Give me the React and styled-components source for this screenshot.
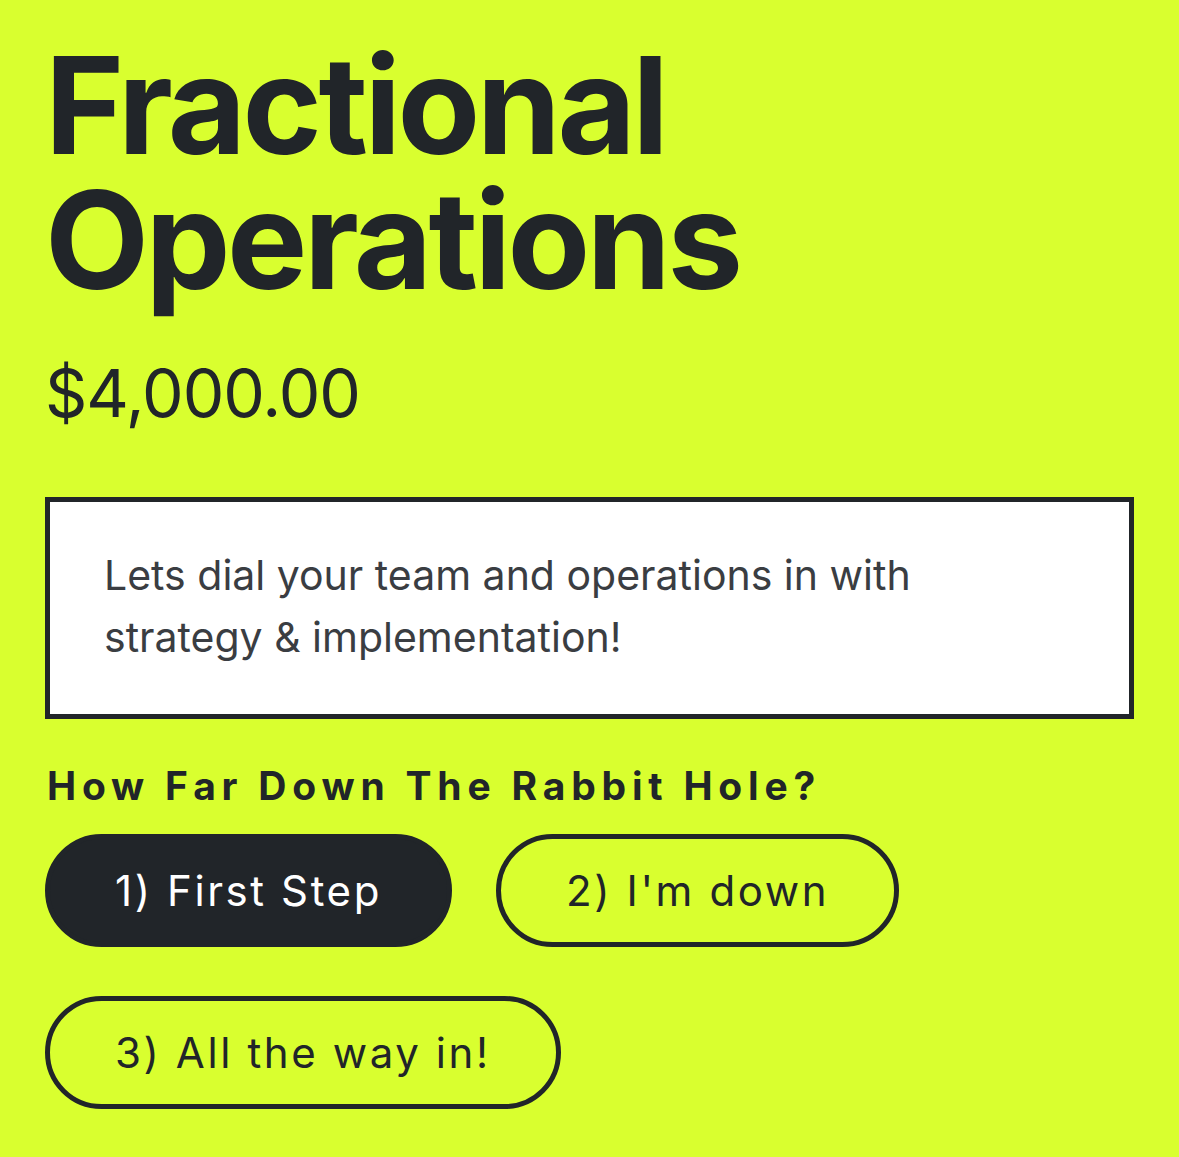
import React, { useState } from 'react';
import styled, { createGlobalStyle } from 'styled-components';

const GlobalStyle = createGlobalStyle`
  html, body {
    margin: 0;
    padding: 0;
    background: #d9ff2f;
  }
  body {
    font-family: Inter, "Noto Sans", sans-serif;
    color: #212529;
  }
`;

const Page = styled.main`
  min-height: 1157px;
  box-sizing: border-box;
  padding: 38px 45px 40px 45px;
  background: #d9ff2f;
`;

const Title = styled.h1`
  margin: 0;
  font-size: 135px;
  font-weight: 700;
  line-height: 135px;
  letter-spacing: -3.5px;
  color: #212529;
`;

const Price = styled.div`
  margin-top: 45px;
  font-size: 66px;
  font-weight: 400;
  line-height: 80px;
  letter-spacing: -1px;
`;

const Description = styled.div`
  margin-top: 64px;
  border: 5px solid #212529;
  background: #ffffff;
  padding: 42px 54px 46px 54px;
  font-size: 41px;
  line-height: 62px;
  color: #3a3d42;
`;

const Label = styled.h2`
  margin: 44px 0 0 2px;
  font-size: 39px;
  font-weight: 700;
  letter-spacing: 5.8px;
  line-height: 46px;
`;

const Options = styled.div`
  margin-top: 25px;
  display: flex;
  flex-wrap: wrap;
  column-gap: 44px;
  row-gap: 49px;
  max-width: 900px;
`;

const Option = styled.button`
  box-sizing: border-box;
  height: 113px;
  padding: 0 65px;
  border-radius: 57px;
  border: 5px solid #212529;
  background: ${p => (p.$active ? '#212529' : 'transparent')};
  color: ${p => (p.$active ? '#ffffff' : '#212529')};
  font-family: Inter, "Noto Sans", sans-serif;
  font-size: 42px;
  font-weight: 400;
  letter-spacing: 2.6px;
  cursor: pointer;
`;

const options = ['1) First Step', "2) I'm down", '3) All the way in!'];

export default function App() {
  const [active, setActive] = useState(0);
  return (
    <>
      <GlobalStyle />
      <Page>
        <Title>
          Fractional
          <br />
          Operations
        </Title>
        <Price>$4,000.00</Price>
        <Description>
          Lets dial your team and operations in with
          <br />
          strategy &amp; implementation!
        </Description>
        <Label>How Far Down The Rabbit Hole?</Label>
        <Options>
          {options.map((o, i) => (
            <Option key={o} $active={active === i} onClick={() => setActive(i)}>
              {o}
            </Option>
          ))}
        </Options>
      </Page>
    </>
  );
}
